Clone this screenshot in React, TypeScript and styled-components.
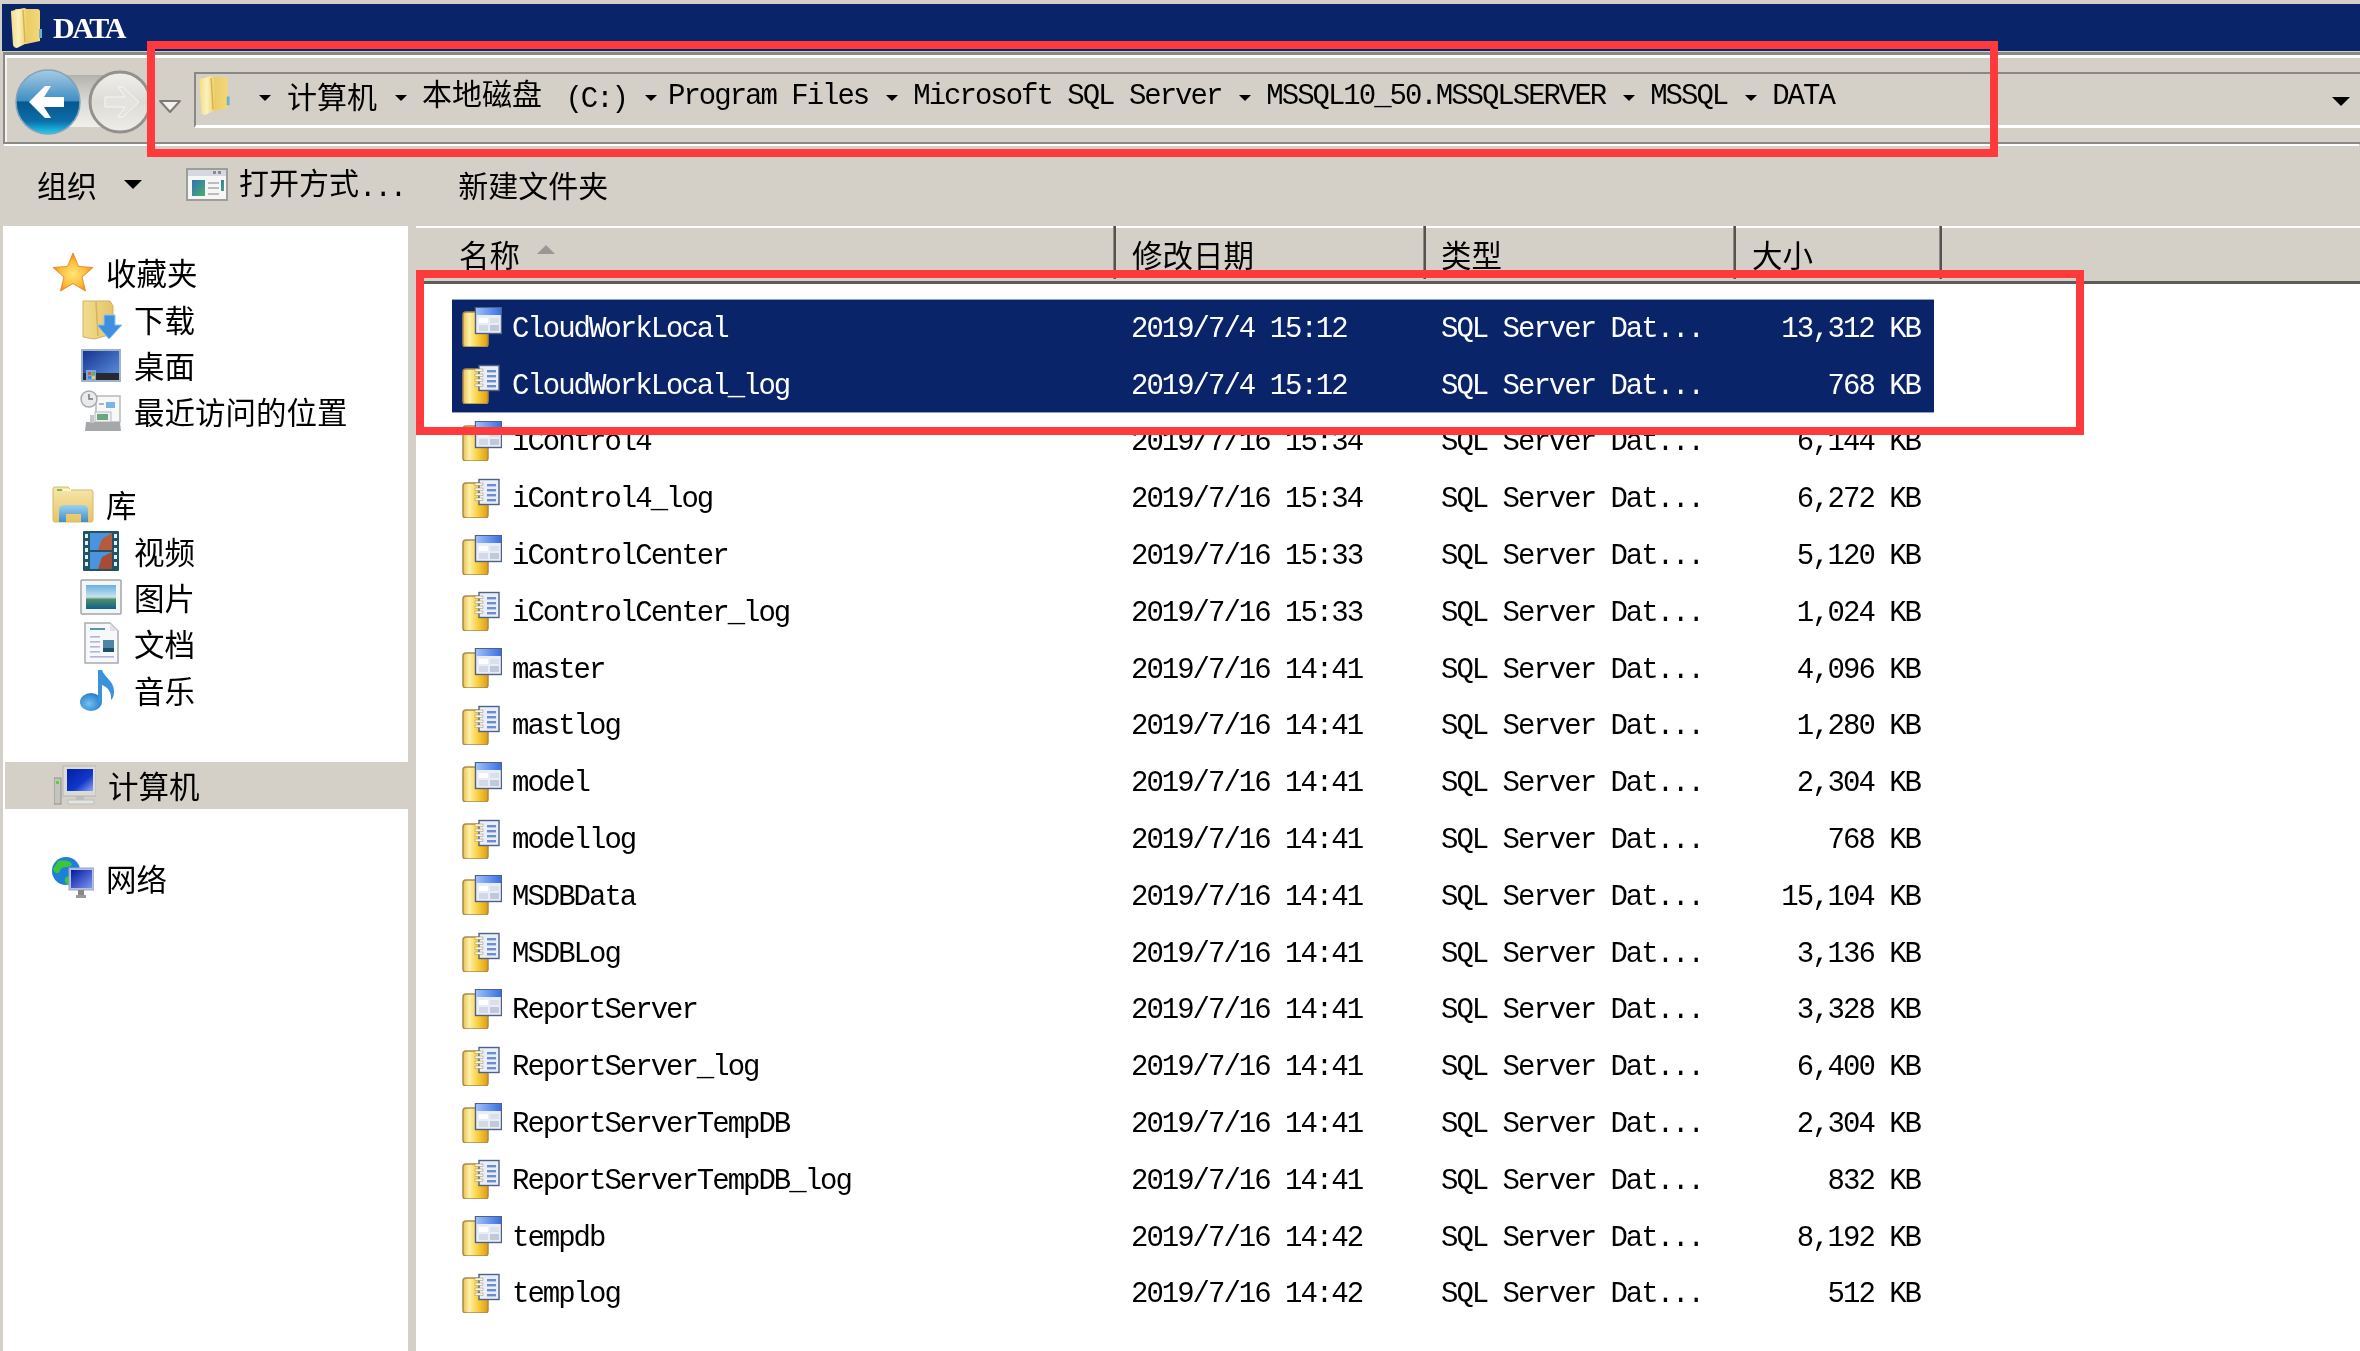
import React from "react";
import styled, { createGlobalStyle } from "styled-components";

const GREY = "#d4d0c8";
const NAVY = "#0a246a";
const MONO = `"Liberation Mono", "Courier New", monospace`;
const CJK = `"Noto Sans CJK SC", "Noto Sans", sans-serif`;

const Global = createGlobalStyle`
  html, body { margin: 0; padding: 0; background: ${GREY}; overflow: hidden; }
  #root { width: 2360px; height: 1351px; }
`;

const Page = styled.div`
  position: relative;
  width: 2360px;
  height: 1351px;
  overflow: hidden;
  background: ${GREY};
  display: flex;
  flex-direction: column;
  padding-top: 4px;
  box-sizing: border-box;
  filter: blur(0.6px);
  font-family: ${CJK};
  color: #000;
`;

const TitleBar = styled.header`
  height: 47px;
  margin-left: 2px;
  background: ${NAVY};
  display: flex;
  align-items: center;
  padding-left: 8px;
  gap: 10px;
  flex: none;
`;
const TitleFolderBox = styled.div`
  width: 33px;
  height: 41px;
  flex: none;
`;
const TitleText = styled.span`
  font-family: "Liberation Serif", serif;
  font-weight: 700;
  font-size: 30px;
  line-height: 30px;
  letter-spacing: -2.4px;
  color: #fff;
`;

const NavFrame = styled.nav`
  flex: none;
  height: 92px;
  margin: 1px 0 3px 3px;
  box-sizing: border-box;
  border: solid #8c8a86;
  border-width: 3px 0 2px 2px;
  box-shadow: inset 0 3px 0 #fff, inset 2px 0 0 #f4f3f0, 0 3px 0 -1px #fff;
  display: flex;
  align-items: flex-start;
  padding: 12px 0 0 10px;
`;
const NavButtons = styled.div`
  flex: none;
  width: 136px;
  height: 68px;
`;
const HistoryDrop = styled.div`
  flex: none;
  width: 36px;
  margin: 28px 0 0 7px;
`;
const AddressBox = styled.div`
  flex: 1;
  height: 56px;
  margin-top: 5px;
  box-sizing: border-box;
  border-top: 2px solid #8a8884;
  border-left: 2px solid #8a8884;
  border-bottom: 3px solid #fff;
  display: flex;
  align-items: flex-start;
  padding: 1px 10px 0 2px;
`;
const Crumbs = styled.div`
  flex: 1;
  display: flex;
  align-items: center;
  height: 40px;
  white-space: pre;
`;
const CrumbFolder = styled.div`
  flex: none;
  width: 33px;
  height: 40px;
  margin-right: 28px;
`;
const Crumb = styled.span`
  font-size: 30px;
  line-height: 38px;
`;
const Latin = styled.span<{ $offset?: number }>`
  font-family: ${MONO};
  font-size: 29px;
  line-height: 40px;
  letter-spacing: -2px;
  margin-left: ${(p) => p.$offset ?? 0}px;
  position: relative;
  top: 2px;
`;
const Caret = styled.i<{ $w?: number }>`
  flex: none;
  display: block;
  width: 0;
  height: 0;
  border-style: solid;
  border-color: #000 transparent transparent;
  border-width: ${(p) => p.$w ?? 6}px ${(p) => p.$w ?? 6}px 0;
`;
const CrumbCaret = styled(Caret)`
  margin: 6px 15px 0 18px;
`;
const CrumbCaretFirst = styled(Caret)`
  margin: 6px 16px 0 0;
`;
const EndCaret = styled(Caret)`
  margin: 22px 0 0 0;
`;

const ToolBar = styled.div`
  flex: none;
  height: 79px;
  display: flex;
  align-items: center;
  padding: 0 0 5px 37px;
  box-sizing: border-box;
`;
const ToolText = styled.span<{ $gap?: number }>`
  font-size: 30px;
  line-height: 40px;
  margin-right: ${(p) => p.$gap ?? 0}px;
  white-space: pre;
`;
const ToolCaret = styled(Caret)`
  margin-right: 44px;
`;
const ToolIcon = styled.div`
  width: 42px;
  height: 33px;
  margin-right: 11px;
`;

const Body = styled.div`
  flex: 1;
  display: flex;
  min-height: 0;
`;
const Sidebar = styled.aside`
  flex: none;
  width: 405px;
  margin-left: 3px;
  background: #fff;
  padding-top: 23px;
  box-sizing: border-box;
`;
const SideRow = styled.div<{ $indent?: boolean; $active?: boolean }>`
  height: 46.4px;
  box-sizing: border-box;
  display: flex;
  align-items: center;
  gap: 12px;
  padding-left: ${(p) => (p.$indent ? 77 : 49)}px;
  margin-left: ${(p) => (p.$active ? 2 : 0)}px;
  background: ${(p) => (p.$active ? GREY : "transparent")};
  font-size: 30.5px;
  line-height: 46px;
`;
const SideGap = styled.div<{ $extra?: number }>`
  height: ${(p) => 46.4 + (p.$extra ?? 0)}px;
`;
const SideIcon = styled.div`
  flex: none;
  width: 42px;
  height: 42px;
  display: flex;
`;

const Files = styled.main`
  flex: 1;
  margin-left: 8px;
  background: #fff;
  display: flex;
  flex-direction: column;
  min-width: 0;
`;
const Header = styled.div`
  flex: none;
  height: 58px;
  box-sizing: border-box;
  background: ${GREY};
  border-top: 2px solid #fff;
  border-bottom: 3px solid #5e5c58;
  display: grid;
  grid-template-columns: 700px 310px 310px 206px 1fr;
`;
const HeadCell = styled.div<{ $pad: number; $last?: boolean }>`
  box-sizing: border-box;
  padding-left: ${(p) => p.$pad}px;
  border-right: ${(p) => (p.$last ? "none" : "2px solid #55534f")};
  box-shadow: ${(p) => (p.$last ? "none" : "inset -1px 0 0 #8c8a86")};
  display: flex;
  align-items: center;
  gap: 17px;
  font-size: 30.5px;
  line-height: 40px;
  height: 53px;
  margin-top: -2px;
`;
const HeadLabel = styled.span`
  position: relative;
  top: 1px;
`;
const SortArrow = styled.i`
  display: block;
  width: 0;
  height: 0;
  border-style: solid;
  border-color: transparent transparent #9a9894;
  border-width: 0 9px 9px;
  margin-top: -6px;
`;
const List = styled.div`
  padding: 15px 0 0 36px;
  width: 1482px;
`;
const Row = styled.div<{ $selected?: boolean }>`
  height: 56.8px;
  display: grid;
  grid-template-columns: 664px 310px 310px 198px;
  align-items: center;
  background: ${(p) => (p.$selected ? NAVY : "transparent")};
  color: ${(p) => (p.$selected ? "#fff" : "#000")};
  &:first-child { box-shadow: ${(p) => (p.$selected ? "inset 0 1px 0 #8fa0c4" : "none")}; }
  &:nth-child(2) { box-shadow: ${(p) => (p.$selected ? "inset 0 -1px 0 #8fa0c4" : "none")}; }
`;
const NameCell = styled.div`
  display: flex;
  align-items: center;
  gap: 10px;
  padding-left: 10px;
`;
const CellIcon = styled.div`
  flex: none;
  width: 40px;
  height: 40px;
`;
const Cell = styled.span<{ $pad?: number; $right?: boolean }>`
  font-family: ${MONO};
  font-size: 29px;
  line-height: 40px;
  letter-spacing: -2px;
  white-space: pre;
  padding-top: 5px;
  padding-left: ${(p) => p.$pad ?? 0}px;
  padding-right: ${(p) => (p.$right ? 14 : 0)}px;
  text-align: ${(p) => (p.$right ? "right" : "left")};
`;

const RedBox = styled.div<{ $x: number; $y: number; $w: number; $h: number }>`
  position: absolute;
  left: ${(p) => p.$x}px;
  top: ${(p) => p.$y}px;
  width: ${(p) => p.$w}px;
  height: ${(p) => p.$h}px;
  box-sizing: border-box;
  border: 8px solid #fe3a3c;
  pointer-events: none;
`;

/* ---------- icons ---------- */
const Svg = styled.svg`
  display: block;
  width: 100%;
  height: 100%;
`;

const FolderIcon = () => (
  <Svg viewBox="0 0 33 41">
    <defs>
      <linearGradient id="fb" x1="0" x2="1" y1="0" y2="0">
        <stop offset="0" stopColor="#e3c25c" />
        <stop offset="1" stopColor="#f3d878" />
      </linearGradient>
      <linearGradient id="ff" x1="0" x2="1" y1="0" y2="0">
        <stop offset="0" stopColor="#f4dc84" />
        <stop offset=".45" stopColor="#fbf1bd" />
        <stop offset="1" stopColor="#eac95f" />
      </linearGradient>
    </defs>
    <path d="M5 2 H27 Q30 2 30 5 V34 L16 37 Z" fill="url(#fb)" />
    <path d="M1 4 L14 1 Q17 1 17 4 L18 34 Q18 37 15 37 L7 41 Q4 41 3 38 L1 6 Z" fill="url(#ff)" />
    <path d="M13 3 L15 35" stroke="#d8b24a" strokeWidth="1.5" />
    <rect x="29" y="22" width="3" height="9" fill="#6fb2c6" />
  </Svg>
);

const NavGlyph = () => (
  <Svg viewBox="0 0 136 68">
    <defs>
      <linearGradient id="cap" x1="0" x2="0" y1="0" y2="1">
        <stop offset="0" stopColor="#b4b2ac" />
        <stop offset=".5" stopColor="#dcdad5" />
        <stop offset="1" stopColor="#f0efeb" />
      </linearGradient>
      <linearGradient id="bk" x1="0" x2="0" y1="0" y2="1">
        <stop offset="0" stopColor="#a8cbe2" />
        <stop offset=".48" stopColor="#3f8fc4" />
        <stop offset=".5" stopColor="#07568f" />
        <stop offset=".8" stopColor="#0c6ea8" />
        <stop offset="1" stopColor="#1fd0f4" />
      </linearGradient>
      <linearGradient id="fw" x1="0" x2="0" y1="0" y2="1">
        <stop offset="0" stopColor="#f0efec" />
        <stop offset=".5" stopColor="#dddbd6" />
        <stop offset="1" stopColor="#eeede9" />
      </linearGradient>
    </defs>
    <rect x="20" y="8" width="100" height="52" fill="url(#cap)" />
    <circle cx="33" cy="35" r="32" fill="url(#bk)" stroke="#7ea4bd" strokeWidth="1.5" />
    <path d="M14 35 L30 19 H36 L29 30 H49 V40 H29 L36 51 H30 Z" fill="#fff" />
    <circle cx="105" cy="35" r="30" fill="url(#fw)" stroke="#93918d" strokeWidth="3" />
    <path d="M124 35 L108 20 H103 L110 30 H90 V40 H110 L103 50 H108 Z" fill="#e4e3df" stroke="#f7f6f3" strokeWidth="1" />
  </Svg>
);

const HistoryGlyph = () => (
  <svg width="24" height="15" viewBox="0 0 24 15">
    <path d="M2 2 H22 L12 13 Z" fill="#f2f1ee" stroke="#7d7b78" strokeWidth="2" strokeLinejoin="round" />
  </svg>
);

const OpenWithGlyph = () => (
  <Svg viewBox="0 0 42 33">
    <defs>
      <linearGradient id="ow" x1="0" x2="1" y1="0" y2="1">
        <stop offset="0" stopColor="#2f72b6" />
        <stop offset="1" stopColor="#4cae6a" />
      </linearGradient>
    </defs>
    <rect x="1" y="1" width="40" height="31" fill="#f6f6f6" stroke="#9d9d9a" strokeWidth="2" />
    <rect x="2" y="2" width="38" height="6" fill="#d5d8de" />
    <rect x="27" y="3" width="3" height="3" fill="#8b8b8b" />
    <rect x="32" y="3" width="3" height="3" fill="#8b8b8b" />
    <rect x="6" y="12" width="13" height="16" fill="url(#ow)" />
    <rect x="22" y="14" width="11" height="2" fill="#bcbcbc" />
    <rect x="22" y="19" width="11" height="2" fill="#bcbcbc" />
    <rect x="22" y="25" width="11" height="2" fill="#bcbcbc" />
    <rect x="35" y="12" width="3" height="11" fill="url(#ow)" />
  </Svg>
);

const StarIcon = () => (
  <Svg viewBox="0 0 42 42">
    <defs>
      <radialGradient id="st" cx=".5" cy=".55" r=".55">
        <stop offset="0" stopColor="#ffe676" />
        <stop offset=".6" stopColor="#fdbd3b" />
        <stop offset="1" stopColor="#ee7a1c" />
      </radialGradient>
    </defs>
    <path d="M21 2 L26.5 15.5 L41 16.5 L30 26 L33.5 40 L21 32.5 L8.5 40 L12 26 L1 16.5 L15.5 15.5 Z" fill="url(#st)" stroke="#ec8a2a" strokeWidth="1" />
  </Svg>
);

const DownloadIcon = () => (
  <Svg viewBox="0 0 42 42">
    <defs>
      <linearGradient id="dl" x1="0" x2="1" y1="0" y2="0">
        <stop offset="0" stopColor="#f2dc90" />
        <stop offset="1" stopColor="#e5c466" />
      </linearGradient>
    </defs>
    <path d="M3 3 H30 L33 8 V36 L14 41 L3 39 Z" fill="url(#dl)" stroke="#cfb162" />
    <path d="M16 4 L18 38" stroke="#d4b35a" strokeWidth="1.5" />
    <path d="M24 17 H35 V27 H42 L29 41 L17 27 H24 Z" fill="#3d8fe0" stroke="#8ec3f2" strokeWidth="1" />
  </Svg>
);

const DesktopIcon = () => (
  <Svg viewBox="0 0 42 42">
    <defs>
      <linearGradient id="dk" x1="0" x2="1" y1="0" y2="1">
        <stop offset="0" stopColor="#16348e" />
        <stop offset="1" stopColor="#5f95e4" />
      </linearGradient>
    </defs>
    <rect x="1" y="5" width="40" height="33" fill="#9db3cc" />
    <rect x="3" y="7" width="36" height="29" fill="url(#dk)" />
    <rect x="3" y="29" width="36" height="7" fill="#26292f" />
    <rect x="6" y="26" width="10" height="10" fill="#7aa6dd" />
    <rect x="8" y="28" width="3" height="3" fill="#e2502c" />
    <rect x="12" y="28" width="3" height="3" fill="#5cb848" />
    <rect x="8" y="32" width="3" height="3" fill="#3d86e6" />
    <rect x="12" y="32" width="3" height="3" fill="#f2c83a" />
  </Svg>
);

const RecentIcon = () => (
  <Svg viewBox="0 0 42 42">
    <rect x="16" y="6" width="24" height="26" fill="#f7f8fa" stroke="#b6b8ba" strokeWidth="1.5" />
    <rect x="26" y="12" width="9" height="6" fill="#7fb0e8" />
    <rect x="19" y="13" width="5" height="2" fill="#b0b4ba" />
    <circle cx="9" cy="9" r="8" fill="#e9eaec" stroke="#a8abae" strokeWidth="1.5" />
    <path d="M9 4 V9 H13" fill="none" stroke="#777" strokeWidth="1.5" />
    <rect x="15" y="22" width="16" height="10" fill="#eef1f4" stroke="#b8babc" />
    <rect x="17" y="24" width="11" height="6" fill="#6ea57e" />
    <path d="M6 32 H40 L41 41 H5 Z" fill="#a6a7a9" />
    <rect x="10" y="25" width="4" height="8" fill="#c5c7c9" />
  </Svg>
);

const LibraryIcon = () => (
  <Svg viewBox="0 0 42 42">
    <defs>
      <linearGradient id="lb" x1="0" x2="0" y1="0" y2="1">
        <stop offset="0" stopColor="#f7e7ae" />
        <stop offset="1" stopColor="#e6c462" />
      </linearGradient>
      <linearGradient id="lc" x1="0" x2="0" y1="0" y2="1">
        <stop offset="0" stopColor="#9fd0ee" />
        <stop offset="1" stopColor="#3d8fcc" />
      </linearGradient>
    </defs>
    <path d="M1 6 Q1 4 3 4 H16 L19 7 H39 Q41 7 41 9 V37 Q41 39 39 39 H3 Q1 39 1 37 Z" fill="url(#lb)" stroke="#d6b968" />
    <rect x="5" y="6" width="5" height="2" fill="#6fc04a" />
    <rect x="11" y="6" width="8" height="2" fill="#fff7d8" />
    <path d="M7 39 V27 Q7 22 12 22 H31 Q36 22 36 27 V39 H29 V31 H14 V39 Z" fill="url(#lc)" />
  </Svg>
);

const VideoIcon = () => (
  <Svg viewBox="0 0 42 42">
    <rect x="3" y="1" width="36" height="40" rx="1" fill="#1f5464" />
    <rect x="10" y="3" width="22" height="17" fill="#4b93dc" />
    <rect x="10" y="22" width="22" height="17" fill="#4b93dc" />
    <path d="M18 20 L22 9 L32 3 V20 Z" fill="#b85a3c" />
    <path d="M18 39 L22 27 L32 22 V39 Z" fill="#a84a34" />
    {[4, 11, 18, 25, 32].map((y) => (
      <React.Fragment key={y}>
        <rect x="5" y={y} width="3" height="4" fill="#e8eef0" />
        <rect x="34" y={y} width="3" height="4" fill="#e8eef0" />
      </React.Fragment>
    ))}
  </Svg>
);

const PictureIcon = () => (
  <Svg viewBox="0 0 42 42">
    <defs>
      <linearGradient id="pc" x1="0" x2="0" y1="0" y2="1">
        <stop offset="0" stopColor="#6aaee0" />
        <stop offset=".5" stopColor="#c8e4ee" />
        <stop offset=".6" stopColor="#4f8e68" />
        <stop offset="1" stopColor="#0f5f8c" />
      </linearGradient>
    </defs>
    <rect x="1" y="4" width="40" height="34" rx="1" fill="#f4f6f6" stroke="#a2a6a8" strokeWidth="1.5" />
    <rect x="6" y="9" width="30" height="24" fill="url(#pc)" />
  </Svg>
);

const DocIcon = () => (
  <Svg viewBox="0 0 42 42">
    <path d="M5 1 H30 L38 9 V41 H5 Z" fill="#f7f8fb" stroke="#a9abad" strokeWidth="1.5" />
    <path d="M30 1 V9 H38 Z" fill="#dfe1e4" />
    <rect x="10" y="6" width="15" height="2" fill="#4f9aa8" />
    {[14, 19, 24, 29].map((y) => (
      <rect key={y} x="10" y={y} width="10" height="1.6" fill="#b3b6d0" />
    ))}
    <rect x="10" y="34" width="24" height="1.6" fill="#b3b6d0" />
    <rect x="23" y="18" width="11" height="12" fill="#4d86a4" />
    <rect x="23" y="26" width="11" height="4" fill="#1e4f6a" />
  </Svg>
);

const MusicIcon = () => (
  <Svg viewBox="0 0 42 42">
    <defs>
      <radialGradient id="mu" cx=".4" cy=".6" r=".7">
        <stop offset="0" stopColor="#72c2f2" />
        <stop offset="1" stopColor="#1c72c4" />
      </radialGradient>
    </defs>
    <ellipse cx="11" cy="33" rx="11" ry="9" fill="url(#mu)" />
    <path d="M18 34 V1 H22 C24 8 34 12 34 22 C34 27 33 29 31 31 C32 24 28 18 22 16 V34 Z" fill="#3a92da" />
  </Svg>
);

const ComputerIcon = () => (
  <Svg viewBox="0 0 42 42">
    <defs>
      <linearGradient id="cm" x1="0" x2="1" y1="0" y2="1">
        <stop offset="0" stopColor="#001ea8" />
        <stop offset=".6" stopColor="#1238c8" />
        <stop offset="1" stopColor="#8fa4f0" />
      </linearGradient>
    </defs>
    <rect x="0" y="14" width="7" height="26" fill="#c5c5c0" stroke="#8f8f8a" />
    <rect x="2" y="17" width="3" height="3" fill="#5ed03a" />
    <rect x="9" y="2" width="33" height="30" fill="#dadad6" stroke="#b5b5b0" />
    <rect x="13" y="5" width="26" height="22" fill="url(#cm)" />
    <rect x="22" y="32" width="8" height="4" fill="#bdbdb8" />
    <rect x="14" y="36" width="26" height="4" fill="#e4e4e0" stroke="#bdbdb8" />
  </Svg>
);

const NetworkIcon = () => (
  <Svg viewBox="0 0 42 42">
    <defs>
      <linearGradient id="nw" x1="0" x2="1" y1="0" y2="1">
        <stop offset="0" stopColor="#0018a0" />
        <stop offset="1" stopColor="#7f94ee" />
      </linearGradient>
    </defs>
    <circle cx="14" cy="14" r="14" fill="#1f7fd8" />
    <path d="M6 4 C12 2 20 4 20 8 C16 12 10 8 8 14 C6 18 2 16 1 12 Z" fill="#3cc43c" />
    <path d="M14 20 C18 18 20 24 16 28 C12 26 12 22 14 20 Z" fill="#3cc43c" />
    <rect x="17" y="11" width="25" height="22" fill="#b7c0dc" stroke="#9aa6cc" />
    <rect x="19" y="13" width="21" height="18" fill="url(#nw)" />
    <rect x="26" y="33" width="6" height="5" fill="#888" />
    <rect x="24" y="38" width="10" height="3" fill="#9a9a9a" />
  </Svg>
);

const Cylinder = () => (
  <>
    <defs>
      <linearGradient id="cy" x1="0" x2="1" y1="0" y2="0">
        <stop offset="0" stopColor="#e8c050" />
        <stop offset=".25" stopColor="#fdf0a8" />
        <stop offset=".6" stopColor="#f8cf3e" />
        <stop offset="1" stopColor="#dd9e12" />
      </linearGradient>
      <linearGradient id="tb" x1="0" x2="1" y1="0" y2="0">
        <stop offset="0" stopColor="#9fc0f8" />
        <stop offset="1" stopColor="#3a70e4" />
      </linearGradient>
    </defs>
    <rect x="1" y="5" width="25" height="35" rx="3" fill="url(#cy)" stroke="#ab8a4c" strokeWidth="1.5" />
  </>
);

const DbIcon = () => (
  <Svg viewBox="0 0 40 40">
    <Cylinder />
    <rect x="13.5" y="0.5" width="26" height="26" fill="#e9edf5" stroke="#4f6286" strokeWidth="1.4" />
    <rect x="14" y="1" width="25" height="7" fill="url(#tb)" />
    <rect x="17" y="11" width="9" height="5" fill="#fff" />
    <rect x="28" y="11" width="9" height="5" fill="#d9dfec" />
    <rect x="17" y="18" width="9" height="6" fill="#d2d8e6" />
    <rect x="28" y="18" width="9" height="6" fill="#c0c8da" />
  </Svg>
);

const LogIcon = () => (
  <Svg viewBox="0 0 40 40">
    <Cylinder />
    <rect x="17" y="1.5" width="20" height="25" fill="#e8eefb" stroke="#4f6286" strokeWidth="1.4" />
    {[6, 11, 16, 21].map((y) => (
      <React.Fragment key={y}>
        <rect x="25" y={y} width="9" height="2.4" fill="#6e8dcc" />
        <rect x="13" y={y - 1} width="8" height="2.4" fill="#f5f5ef" stroke="#a08a50" strokeWidth=".5" />
      </React.Fragment>
    ))}
  </Svg>
);

/* ---------- data ---------- */
type File = { name: string; date: string; size: string; log: boolean; selected?: boolean };
const f = (name: string, date: string, size: string, log: boolean, selected = false): File => ({
  name,
  date,
  size,
  log,
  selected,
});
const FILES: File[] = [
  f("CloudWorkLocal", "2019/7/4 15:12", "13,312 KB", false, true),
  f("CloudWorkLocal_log", "2019/7/4 15:12", "768 KB", true, true),
  f("iControl4", "2019/7/16 15:34", "6,144 KB", false),
  f("iControl4_log", "2019/7/16 15:34", "6,272 KB", true),
  f("iControlCenter", "2019/7/16 15:33", "5,120 KB", false),
  f("iControlCenter_log", "2019/7/16 15:33", "1,024 KB", true),
  f("master", "2019/7/16 14:41", "4,096 KB", false),
  f("mastlog", "2019/7/16 14:41", "1,280 KB", true),
  f("model", "2019/7/16 14:41", "2,304 KB", false),
  f("modellog", "2019/7/16 14:41", "768 KB", true),
  f("MSDBData", "2019/7/16 14:41", "15,104 KB", false),
  f("MSDBLog", "2019/7/16 14:41", "3,136 KB", true),
  f("ReportServer", "2019/7/16 14:41", "3,328 KB", false),
  f("ReportServer_log", "2019/7/16 14:41", "6,400 KB", true),
  f("ReportServerTempDB", "2019/7/16 14:41", "2,304 KB", false),
  f("ReportServerTempDB_log", "2019/7/16 14:41", "832 KB", true),
  f("tempdb", "2019/7/16 14:42", "8,192 KB", false),
  f("templog", "2019/7/16 14:42", "512 KB", true),
];

const Side = ({ icon, label, indent, active }: { icon: React.ReactNode; label: string; indent?: boolean; active?: boolean }) => (
  <SideRow $indent={indent} $active={active}>
    <SideIcon>{icon}</SideIcon>
    <span>{label}</span>
  </SideRow>
);

export default function App() {
  return (
    <Page>
      <Global />
      <TitleBar>
        <TitleFolderBox>
          <FolderIcon />
        </TitleFolderBox>
        <TitleText>DATA</TitleText>
      </TitleBar>

      <NavFrame>
        <NavButtons>
          <NavGlyph />
        </NavButtons>
        <HistoryDrop>
          <HistoryGlyph />
        </HistoryDrop>
        <AddressBox>
          <Crumbs>
            <CrumbFolder>
              <FolderIcon />
            </CrumbFolder>
            <CrumbCaretFirst />
            <Crumb>计算机</Crumb>
            <CrumbCaret />
            <Crumb>
              本地磁盘
              <Latin $offset={8}> (C:)</Latin>
            </Crumb>
            <CrumbCaret />
            <Latin $offset={-4}>Program Files</Latin>
            <CrumbCaret />
            <Latin>Microsoft SQL Server</Latin>
            <CrumbCaret />
            <Latin>MSSQL10_50.MSSQLSERVER</Latin>
            <CrumbCaret />
            <Latin>MSSQL</Latin>
            <CrumbCaret />
            <Latin>DATA</Latin>
          </Crumbs>
          <EndCaret $w={9} />
        </AddressBox>
      </NavFrame>

      <ToolBar>
        <ToolText $gap={27}>组织</ToolText>
        <ToolCaret $w={9} />
        <ToolIcon>
          <OpenWithGlyph />
        </ToolIcon>
        <ToolText $gap={53}>
          打开方式
          <Latin>...</Latin>
        </ToolText>
        <ToolText>新建文件夹</ToolText>
      </ToolBar>

      <Body>
        <Sidebar>
          <Side icon={<StarIcon />} label="收藏夹" />
          <Side indent icon={<DownloadIcon />} label="下载" />
          <Side indent icon={<DesktopIcon />} label="桌面" />
          <Side indent icon={<RecentIcon />} label="最近访问的位置" />
          <SideGap />
          <Side icon={<LibraryIcon />} label="库" />
          <Side indent icon={<VideoIcon />} label="视频" />
          <Side indent icon={<PictureIcon />} label="图片" />
          <Side indent icon={<DocIcon />} label="文档" />
          <Side indent icon={<MusicIcon />} label="音乐" />
          <SideGap $extra={3} />
          <Side active icon={<ComputerIcon />} label="计算机" />
          <SideGap />
          <Side icon={<NetworkIcon />} label="网络" />
        </Sidebar>

        <Files>
          <Header>
            <HeadCell $pad={43}>
              <HeadLabel>名称</HeadLabel>
              <SortArrow />
            </HeadCell>
            <HeadCell $pad={16}>
              <HeadLabel>修改日期</HeadLabel>
            </HeadCell>
            <HeadCell $pad={15}>
              <HeadLabel>类型</HeadLabel>
            </HeadCell>
            <HeadCell $pad={16}>
              <HeadLabel>大小</HeadLabel>
            </HeadCell>
            <HeadCell $pad={0} $last />
          </Header>
          <List>
            {FILES.map((file) => (
              <Row key={file.name} $selected={file.selected}>
                <NameCell>
                  <CellIcon>{file.log ? <LogIcon /> : <DbIcon />}</CellIcon>
                  <Cell>{file.name}</Cell>
                </NameCell>
                <Cell $pad={15}>{file.date}</Cell>
                <Cell $pad={15}>SQL Server Dat...</Cell>
                <Cell $right>{file.size}</Cell>
              </Row>
            ))}
          </List>
        </Files>
      </Body>

      <RedBox $x={147} $y={41} $w={1851} $h={116} />
      <RedBox $x={416} $y={270} $w={1668} $h={165} />
    </Page>
  );
}
